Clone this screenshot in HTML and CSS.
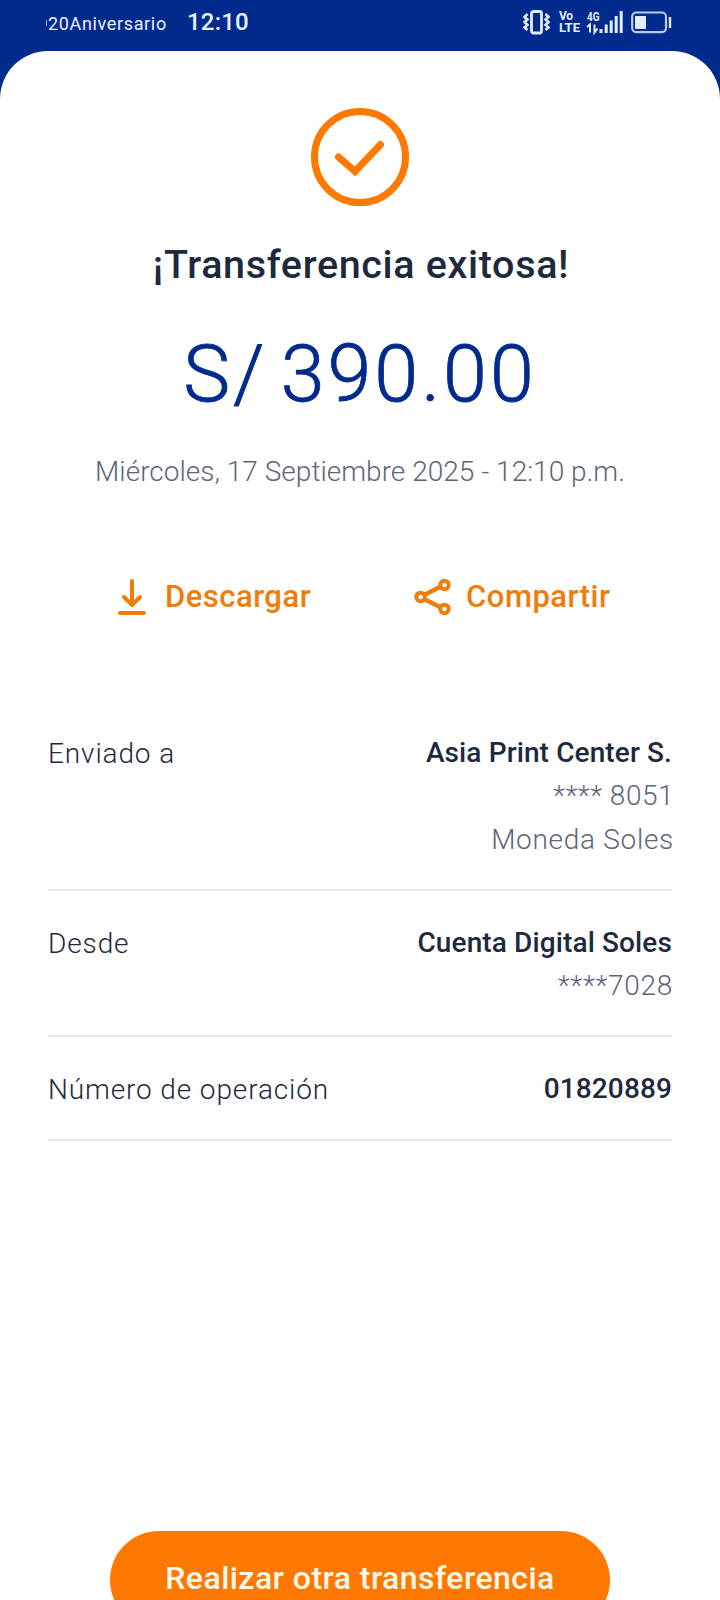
FILE: index.html
```
<!DOCTYPE html>
<html lang="es">
<head>
<meta charset="utf-8">
<title>Transferencia exitosa</title>
<link rel="stylesheet" href="styles.css">
</head>
<body>
<div class="phone">
  <header class="status">
    <span class="carrier-clip"><i class="carrier-edge"></i><span class="carrier">20Aniversario</span></span>
    <span class="clock">12:10</span>
    <svg class="status-icons" width="150" height="30" viewBox="0 0 150 30" fill="none" stroke="#e4ecff">
      <rect x="8.500" y="3.500" width="10" height="21.500" rx="2" stroke-width="2.800"/>
      <path d="M4.500 6L1.500 9L4.500 11.500L1.500 14L4.500 17L1.500 19.500L4.500 22M22.500 6L25.500 9L22.500 11.500L25.500 14L22.500 17L25.500 19.500L22.500 22" stroke-width="2.500"/>
      <g class="tiny" fill="#e4ecff" stroke="none">
        <text x="36" y="12" font-size="12" textLength="14">Vo</text>
        <text x="36" y="24" font-size="12.500" textLength="21" lengthAdjust="spacingAndGlyphs">LTE</text>
        <text x="64" y="12.500" font-size="13.500" textLength="12.500" lengthAdjust="spacingAndGlyphs">4G</text>
      </g>
      <path d="M64 19l3-2.500v8M71.500 16.500v8l3-4" stroke-width="2"/>
      <path d="M78 25v-4M83.200 25v-8.500M88.200 25v-12.500M93.200 25v-17M98.200 25v-22" stroke-width="3"/>
      <rect x="109.200" y="4.500" width="33.800" height="19.600" rx="4" stroke-width="2.200" stroke="#b9ccf5"/>
      <rect x="112" y="8" width="11" height="13" rx="1" fill="#e4ecff" stroke="none"/>
      <path d="M147 9v11" stroke-width="2.400"/>
    </svg>
  </header>
  <main class="sheet">
    <svg class="check" width="98" height="98" viewBox="0 0 98 98" fill="none" stroke="#ff7800" stroke-width="7">
      <circle cx="49" cy="49" r="45.500"/>
      <path d="M27.500 49L44 63.500L69.500 36.500" stroke-linecap="round"/>
    </svg>
    <h1 class="title">¡Transferencia exitosa!</h1>
    <p class="amount">S/ 390.00</p>
    <p class="date">Miércoles, 17 Septiembre 2025 - 12:10 p.m.</p>
    <div class="actions">
      <button class="action">
        <svg width="28" height="38" viewBox="0 0 28 38" fill="none" stroke="#ee7d0b" stroke-width="4" stroke-linecap="round" stroke-linejoin="round"><path d="M14 3V26M6 19L14 27L22 19M2 35H26"/></svg>
        <span>Descargar</span>
      </button>
      <button class="action action-share">
        <svg width="38" height="38" viewBox="0 0 38 38" fill="none" stroke="#ee7d0b" stroke-width="4"><path d="M10 17L26 9M10 21L26 29" stroke-width="4.500"/><circle cx="6.500" cy="19" r="4.200"/><circle cx="30.500" cy="7" r="4.200"/><circle cx="30.500" cy="31" r="4.200"/></svg>
        <span>Compartir</span>
      </button>
    </div>
    <dl class="details">
      <div class="row">
        <dt class="label">Enviado a</dt>
        <dd class="values"><strong class="name">Asia Print Center S.</strong><span class="sub">**** 8051</span><span class="sub sub-wide">Moneda Soles</span></dd>
      </div>
      <div class="row">
        <dt class="label">Desde</dt>
        <dd class="values"><strong class="name">Cuenta Digital Soles</strong><span class="sub sub-account">****7028</span></dd>
      </div>
      <div class="row">
        <dt class="label">Número de operación</dt>
        <dd class="values"><strong class="name">01820889</strong></dd>
      </div>
    </dl>
    <button class="primary">Realizar otra transferencia</button>
  </main>
</div>
</body>
</html>
```
FILE: styles.css
```
* { box-sizing: border-box; }
body { margin: 0; font-family: Roboto, "Open Sans", sans-serif; color: #1e293d; }
button { border: 0; padding: 0; background: none; font: inherit; }
h1, p, dl, dd { margin: 0; }
.phone { width: 720px; height: 1600px; overflow: hidden; background: #002a8c; display: flex; flex-direction: column; }
.status { height: 51px; flex: none; display: flex; align-items: flex-start; padding: 8px 48px 0 46px; color: #e9f0ff; }
.carrier-clip { display: flex; align-items: center; width: 141px; height: 30px; font-size: 18px; font-weight: 400; letter-spacing: .65px; }
.carrier-edge { width: 1px; height: 6px; margin-right: 1px; background: #a9bdec; }
.clock { font-size: 24px; line-height: 29px; font-weight: 500; letter-spacing: .2px; }
.status-icons { margin-left: auto; margin-right: -1px; }
.tiny { font-weight: 700; }
.sheet { flex: 1; min-height: 0; background: #fff; border-radius: 48px 48px 0 0; display: flex; flex-direction: column; align-items: center; padding: 57px 48px 0; }
.check { flex: none; }
.title { margin-top: 35px; padding-left: 2px; font-size: 39.5px; line-height: 48px; font-weight: 500; letter-spacing: .65px; }
.amount { margin-top: 40px; font-size: 79px; line-height: 90px; font-weight: 300; letter-spacing: 3px; word-spacing: -9px; color: #002a8c; -webkit-text-stroke: .8px #002a8c; }
.date { margin-top: 35px; font-size: 28px; line-height: 36px; font-weight: 300; letter-spacing: .02px; color: #5d6678; }
.actions { align-self: stretch; display: flex; margin-top: 87px; padding-left: 70px; gap: 103px; }
.action { display: flex; align-items: center; gap: 19px; height: 40px; font-size: 31px; line-height: 40px; font-weight: 500; letter-spacing: .5px; color: #ee7d0b; }
.action-share { gap: 14px; }
.details { align-self: stretch; margin-top: 84px; }
.row { display: flex; justify-content: space-between; padding: 30px 0 28px; border-bottom: 2px solid #e6e7e9; font-size: 28px; line-height: 43.3px; }
.label { padding-top: 1px; height: 43.3px; font-weight: 300; letter-spacing: .87px; }
.values { display: flex; flex-direction: column; align-items: flex-end; }
.name { font-weight: 500; letter-spacing: .12px; }
.sub { font-weight: 300; letter-spacing: .5px; margin-right: -2px; color: #5d6678; }
.sub-wide { letter-spacing: .7px; }
.sub-account { letter-spacing: .7px; margin-right: -1px; }
.primary { flex: none; width: 500px; height: 98px; margin-top: 390px; padding-bottom: 3px; border-radius: 49px; background: #ff7800; color: #fff8ec; font-size: 32px; font-weight: 500; letter-spacing: .45px; }
```
